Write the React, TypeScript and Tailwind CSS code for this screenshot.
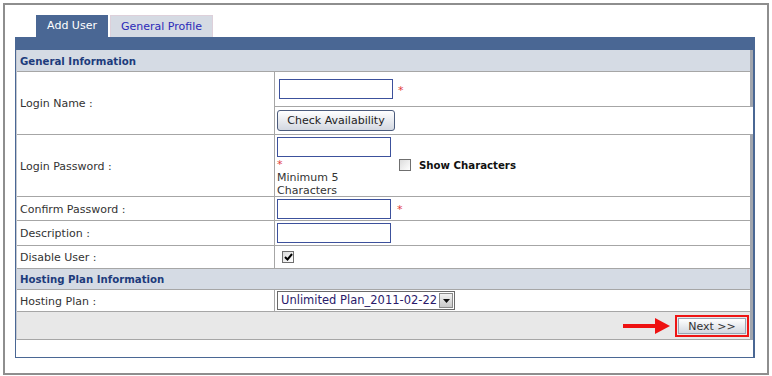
const line = 'border-[#a6a6a6]';

function Field({ w = 'w-[114px]' }: { w?: string }) {
  return <span className={`block h-[20px] ${w} border border-[#3c519c] bg-white`} />;
}

function Star({ className = '' }: { className?: string }) {
  return <span className={`text-[#e23a3a] text-[11px] leading-none ${className}`}>*</span>;
}

function Check({ checked = false }: { checked?: boolean }) {
  return (
    <span className="flex h-[12px] w-[12px] items-center justify-center border border-[#6f6f6f] bg-gradient-to-br from-[#dcdcdc] to-white">
      {checked && (
        <svg width="9" height="8" viewBox="0 0 9 8">
          <path d="M1 4 L3.5 6.5 L8 1" fill="none" stroke="#000" strokeWidth="2" />
        </svg>
      )}
    </span>
  );
}

function Label({ children }: { children: React.ReactNode }) {
  return (
    <div className={`flex w-[258px] shrink-0 items-center border-r ${line} pl-[3px] pt-[3px]`}>{children}</div>
  );
}

function Row({
  label,
  h,
  children,
}: {
  label: string;
  h: string;
  children: React.ReactNode;
}) {
  return (
    <div className={`flex ${h} border-b ${line}`}>
      <Label>{label}</Label>
      <div className="flex flex-1 items-center pl-[2px]">{children}</div>
    </div>
  );
}

function Section({ title, h }: { title: string; h: string }) {
  return (
    <div className={`flex ${h} items-center border-b ${line} bg-[#d5dbe4] pl-[3px] pt-[2px] text-[10.2px] font-bold text-[#1d3b7c]`}>
      {title}
    </div>
  );
}

export default function App() {
  return (
    <div className="h-[376px] w-[772px] bg-white pl-[3px] pt-[3px] font-['DejaVu_Sans',Verdana,sans-serif] text-[11px] text-[#333]">
      <div className="h-[372px] w-[766px] border-2 border-[#8e8e8e] pl-[10px] pt-[10px]">
        {/* tabs */}
        <div className="ml-[21px] flex h-[22px] gap-[2px]">
          <div className="flex w-[72px] items-center justify-center bg-[#4a6794] pt-[1px] text-white">Add User</div>
          <div className="flex w-[103px] items-center justify-center border border-b-0 border-[#ddd0da] bg-[#d5dae3] pt-[1px] text-[#2b2bb8]">
            General Profile
          </div>
        </div>

        <div className="w-[740px]">
          <div className="h-[13px] bg-[#4a6794]" />
          <div className="h-[308px] border-b border-l border-r-2 border-[#4a6794]">
            <div className="border-l border-r-[3px] border-l-[#c4c8d0] border-r-[#a2a6ae]">
              <Section title="General Information" h="h-[22px]" />

              {/* login name */}
              <div className={`flex h-[63px] border-b ${line}`}>
                <Label>Login Name :</Label>
                <div className="flex flex-1 flex-col">
                  <div className={`flex h-[35px] items-center gap-[5px] border-b ${line} pl-[4px]`}>
                    <Field />
                    <Star className="pt-[2px]" />
                  </div>
                  <div className="-mr-[3px] flex h-[27px] items-center bg-white pl-[2px]">
                    <button className="h-[21px] w-[118px] rounded-[3px] border border-[#4b5b7c] bg-gradient-to-b from-white to-[#d3d8e1] pt-[1px] text-[11px] text-[#222]">
                      Check Availability
                    </button>
                  </div>
                </div>
              </div>

              {/* login password */}
              <div className={`flex h-[62px] border-b ${line}`}>
                <Label>Login Password :</Label>
                <div className="flex flex-1 items-center pl-[2px]">
                  <div className="flex w-[114px] flex-col self-start pt-[2px]">
                    <Field />
                    <span className="flex h-[13px] items-end">
                      <Star />
                    </span>
                    <span className="pt-[1px] leading-[13px]">
                      Minimum 5
                      <br />
                      Characters
                    </span>
                  </div>
                  <div className="ml-[8px] flex items-center gap-[8px]">
                    <Check />
                    <span className="pt-[1px] text-[10.2px] font-bold text-[#111]">Show Characters</span>
                  </div>
                </div>
              </div>

              <Row label="Confirm Password :" h="h-[24px]">
                <Field />
                <Star className="ml-[6px] pt-[2px]" />
              </Row>
              <Row label="Description :" h="h-[25px]">
                <Field />
              </Row>
              <Row label="Disable User :" h="h-[23px]">
                <span className="ml-[5px]">
                  <Check checked />
                </span>
              </Row>

              <Section title="Hosting Plan Information" h="h-[21px]" />

              <Row label="Hosting Plan :" h="h-[22px]">
                <div className="flex h-[19px] w-[178px] items-center border border-[#6a6a6a] bg-white">
                  <span className="flex-1 whitespace-nowrap pl-[3px] text-[11.5px] text-[#2a1a6a]">Unlimited Plan_2011-02-22</span>
                  <span className="mr-[1px] flex h-[15px] w-[14px] items-center justify-center border border-[#8a8a8a] bg-gradient-to-b from-[#f2f2f2] to-[#c9c9c9]">
                    <svg width="7" height="4" viewBox="0 0 7 4">
                      <path d="M0 0 H7 L3.5 4 Z" fill="#111" />
                    </svg>
                  </span>
                </div>
              </Row>

              {/* footer */}
              <div className={`flex h-[28px] items-center justify-end gap-[4px] border-b ${line} bg-[#e8e8e8] pr-[1px]`}>
                <svg width="48" height="18" viewBox="0 0 48 18">
                  <rect x="0" y="7" width="34" height="4" fill="#ee1111" />
                  <path d="M32 1 L47 9 L32 17 Z" fill="#ee1111" />
                </svg>
                <div className="h-[22px] w-[74px] border-2 border-[#ee1414] p-[1px]">
                  <button className="h-full w-full border border-[#9aa4b4] bg-gradient-to-b from-white to-[#d3d8e0] text-[11px] text-[#333]">
                    Next &gt;&gt;
                  </button>
                </div>
              </div>
            </div>
          </div>
        </div>
      </div>
    </div>
  );
}
